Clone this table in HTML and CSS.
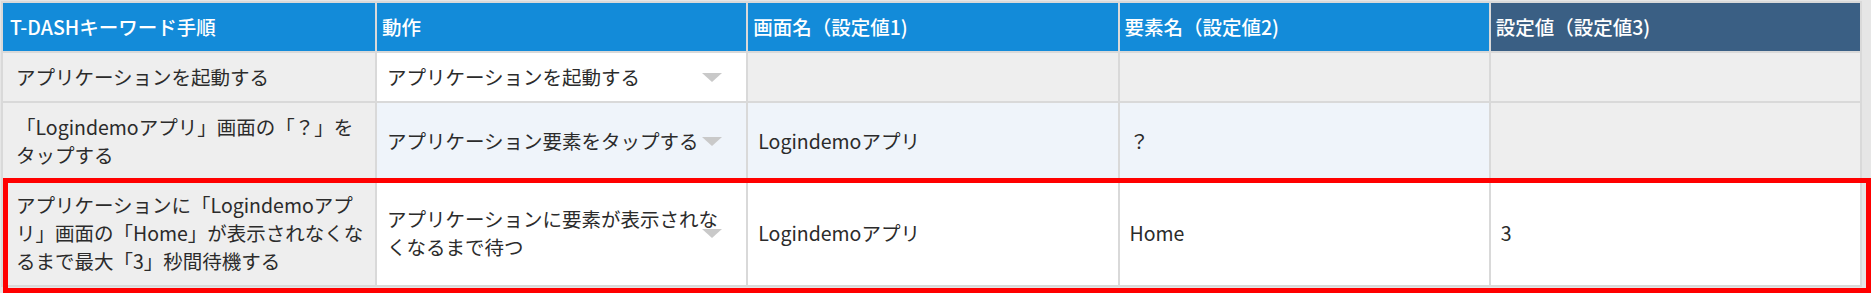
FILE: index.html
```html
<!DOCTYPE html>
<html lang="ja">
<head>
	<meta charset="UTF-8">
	<title>T-DASH</title>
	<link rel="stylesheet" href="styles.css">
</head>
<body>
	<div class="sheet">
		<table class="steps">
			<thead>
				<tr>
					<th class="c1">T-DASHキーワード手順</th>
					<th>動作</th>
					<th>画面名（設定値1)</th>
					<th>要素名（設定値2)</th>
					<th class="last">設定値（設定値3)</th>
				</tr>
			</thead>
			<tbody>
				<tr>
					<td class="c1">アプリケーションを起動する</td>
					<td class="sel">アプリケーションを起動する<span class="arrow"></span></td>
					<td class="off"></td>
					<td class="off"></td>
					<td class="off"></td>
				</tr>
				<tr class="alt">
					<td class="c1">「Logindemoアプリ」画面の「？」を<br>タップする</td>
					<td class="sel">アプリケーション要素をタップする<span class="arrow"></span></td>
					<td>Logindemoアプリ</td>
					<td>？</td>
					<td class="off"></td>
				</tr>
				<tr>
					<td class="c1">アプリケーションに「Logindemoアプ<br>リ」画面の「Home」が表示されなくな<br>るまで最大「3」秒間待機する</td>
					<td class="sel">アプリケーションに要素が表示されなくなるまで待つ<span class="arrow"></span></td>
					<td>Logindemoアプリ</td>
					<td>Home</td>
					<td>3</td>
				</tr>
			</tbody>
		</table>
		<!-- 選択中の行 -->
		<div class="mark"></div>
	</div>
</body>
</html>
```

FILE: styles.css
```css
* {margin: 0;padding: 0;box-sizing: border-box;}
body {background: #fff;font-family: "Noto Sans CJK JP", "Noto Sans", sans-serif;color: #2b2b2b;}
.sheet {position: relative;width: 1871px;height: 293px;overflow: hidden;background: #e6e6e6;}

.steps {margin: 1px 0 0 1px;border-collapse: separate;border-spacing: 2px;background: #d9d9d9;table-layout: fixed;width: 1861px;}
.steps th, .steps td {font-size: 19.5px;line-height: 28px;text-align: left;vertical-align: middle;}
.steps th {height: 48px;padding: 0 5px;background: #138bd9;color: #fff;font-weight: 500;}
.steps th.c1 {width: 372px;padding-left: 7px;}
.steps th.last {background: #3a5f84;}

.steps td {padding: 10px 12px 10px 10px;background: #fff;position: relative;}
.steps td.c1 {padding: 10px 6px 10px 13px;background: #eee;}
.steps td.off {background: #eee;}
.steps tr.alt td {background: #eff4fa;}
.steps tr.alt td.c1, .steps tr.alt td.off {background: #eee;}

/* プルダウンの▼ */
.arrow {position: absolute;right: 24px;top: 50%;margin-top: -4px;width: 0;height: 0;border-left: 10px solid transparent;border-right: 10px solid transparent;border-top: 9px solid #c9c9c9;}

.mark {position: absolute;left: 3px;top: 178px;width: 1868px;height: 115px;border: 5px solid #f00;}
```
